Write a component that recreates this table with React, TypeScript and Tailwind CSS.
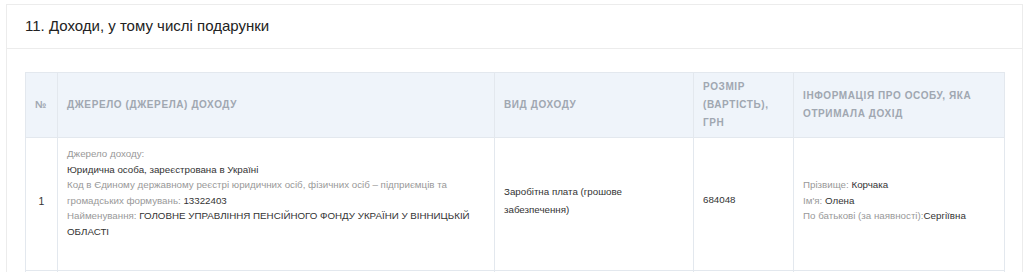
const headers = [
  { label: "№", className: "w-[32px] text-center px-0" },
  { label: "Джерело (джерела) доходу", className: "w-[437px]" },
  { label: "Вид доходу", className: "w-[199px]" },
  { label: "Розмір (вартість), грн", className: "w-[100px]" },
  { label: "Інформація про особу, яка отримала дохід", className: "w-[211px]" },
];

function Label({ children }: { children: React.ReactNode }) {
  return <span className="text-[#999]">{children}</span>;
}

export default function App() {
  return (
    <div className="min-h-[272px] bg-white pt-[4px] pl-[6px] font-['Liberation_Sans',Arial,sans-serif] text-[#333]">
      <div className="w-[1017px] border border-[#ececec] bg-white">
        <div className="flex h-[44px] items-center border-b border-[#ececec] px-[18px] text-[15px] text-[#222]">
          11. Доходи, у тому числі подарунки
        </div>
        <div className="px-[18px] pt-[23px]">
          <table className="w-[979px] table-fixed border-collapse text-[9.75px]">
            <thead>
              <tr className="h-[65px] bg-[#eff4fa]">
                {headers.map((h) => (
                  <th
                    key={h.label}
                    className={`border border-[#e3e8ee] px-[9px] text-left align-middle text-[10px] font-bold uppercase leading-[18px] tracking-[0.6px] text-[#a0a7b1] ${h.className}`}
                  >
                    {h.label}
                  </th>
                ))}
              </tr>
            </thead>
            <tbody>
              <tr className="h-[133px]">
                <td className="border border-[#e3e8ee] pb-[5px] text-center align-middle text-[10.5px]">1</td>
                <td className="border border-[#e3e8ee] px-[9px] pt-[8px] align-top leading-[15.5px]">
                  <div>
                    <Label>Джерело доходу:</Label>
                  </div>
                  <div>Юридична особа, зареєстрована в Україні</div>
                  <div>
                    <Label>
                      Код в Єдиному державному реєстрі юридичних осіб, фізичних осіб – підприємців та
                      громадських формувань:
                    </Label>{" "}
                    13322403
                  </div>
                  <div>
                    <Label>Найменування:</Label> ГОЛОВНЕ УПРАВЛІННЯ ПЕНСІЙНОГО ФОНДУ УКРАЇНИ У ВІННИЦЬКІЙ
                    ОБЛАСТІ
                  </div>
                </td>
                <td className="border border-[#e3e8ee] px-[9px] pb-[7px] align-middle leading-[18px]">
                  Заробітна плата (грошове забезпечення)
                </td>
                <td className="border border-[#e3e8ee] px-[9px] pb-[7px] align-middle">684048</td>
                <td className="border border-[#e3e8ee] px-[9px] pb-[7px] align-middle leading-[15.5px]">
                  <div>
                    <Label>Прізвище:</Label> Корчака
                  </div>
                  <div>
                    <Label>Ім'я:</Label> Олена
                  </div>
                  <div>
                    <Label>По батькові (за наявності):</Label>Сергіївна
                  </div>
                </td>
              </tr>
              <tr className="h-[30px]">
                <td className="border border-[#e3e8ee]" />
                <td className="border border-[#e3e8ee]" />
                <td className="border border-[#e3e8ee]" />
                <td className="border border-[#e3e8ee]" />
                <td className="border border-[#e3e8ee]" />
              </tr>
            </tbody>
          </table>
        </div>
      </div>
    </div>
  );
}
